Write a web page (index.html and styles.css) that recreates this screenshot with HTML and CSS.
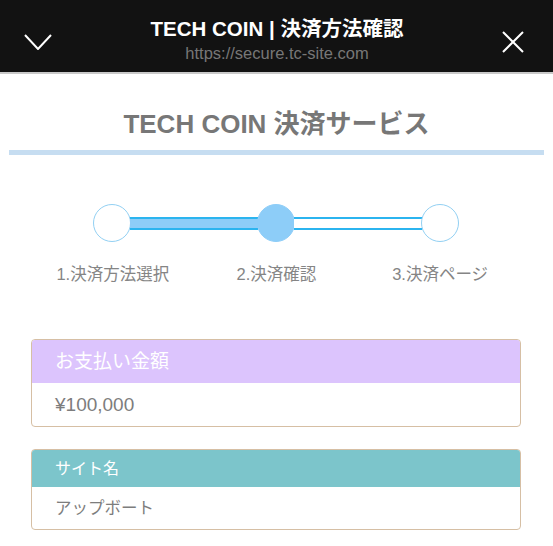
FILE: index.html
```html
<!DOCTYPE html>
<html lang="ja">
<head>
<meta charset="utf-8">
<link rel="stylesheet" href="styles.css">
</head>
<body>
<header class="topbar">
  <svg class="icon chevron" viewBox="0 0 28 16" width="28" height="16"><path d="M1 1 L14 15 L27 1" fill="none" stroke="#fff" stroke-width="2"/></svg>
  <div class="topbar-text">
    <div class="topbar-title">TECH COIN | 決済方法確認</div>
    <div class="topbar-url">https://secure.tc-site.com</div>
  </div>
  <svg class="icon close" viewBox="0 0 22 22" width="22" height="22"><path d="M1 1 L21 21 M21 1 L1 21" fill="none" stroke="#fff" stroke-width="2"/></svg>
</header>
<main>
  <h1 class="page-title">TECH COIN 決済サービス</h1>
  <div class="title-rule"></div>
  <section class="steps">
    <div class="track">
      <span class="dot"></span>
      <span class="seg seg-done"></span>
      <span class="dot dot-active"></span>
      <span class="seg"></span>
      <span class="dot"></span>
    </div>
    <div class="labels">
      <span>1.決済方法選択</span>
      <span>2.決済確認</span>
      <span>3.決済ページ</span>
    </div>
  </section>
  <section class="card">
    <div class="card-head head-purple">お支払い金額</div>
    <div class="card-body">¥100,000</div>
  </section>
  <section class="card card-site">
    <div class="card-head head-teal">サイト名</div>
    <div class="card-body">アップボート</div>
  </section>
</main>
</body>
</html>
```
FILE: styles.css
```css
* { box-sizing: border-box; }
body {
  margin: 0;
  background: #fff;
  font-family: "Liberation Sans", "Noto Sans CJK JP", sans-serif;
}
.topbar {
  height: 74px;
  background: #121212;
  border-bottom: 2px solid #c9c9c9;
  display: flex;
  align-items: center;
  justify-content: space-between;
  padding: 0 29px 0 24px;
}
.icon { display: block; }
.chevron { margin-top: 12px; }
.close { margin-top: 12px; }
.topbar-text {
  text-align: center;
  padding-top: 6px;
}
.topbar-title {
  color: #fff;
  font-weight: bold;
  font-size: 20.5px;
  line-height: 24px;
}
.topbar-url {
  color: #777;
  font-size: 16.5px;
  line-height: 18px;
  margin-top: 3px;
}
.page-title {
  margin: 0;
  padding-top: 35px;
  text-align: center;
  color: #777;
  font-size: 26px;
  line-height: 30px;
  font-weight: bold;
}
.title-rule {
  margin: 11px 9px 0;
  height: 5px;
  background: #c6ddf1;
}
.steps {
  margin: 49px 31px 0;
}
.track {
  display: flex;
  align-items: center;
  padding: 0 63px 0 62px;
}
.dot {
  flex: none;
  width: 38px;
  height: 38px;
  border-radius: 50%;
  border: 1.5px solid #92d0f3;
  background: #fff;
}
.dot-active {
  background: #8dcdf8;
  border-color: #8dcdf8;
}
.seg {
  flex: 1;
  height: 13px;
  border-top: 2px solid #2bb4ef;
  border-bottom: 2px solid #2bb4ef;
  background: #fff;
  margin: 0 -1px;
}
.seg-done { background: #8dcdf8; }
.labels {
  display: grid;
  grid-template-columns: repeat(3, 1fr);
  margin-top: 22px;
  text-align: center;
  color: #858585;
  font-size: 16.5px;
  line-height: 20px;
}
.card {
  margin: 55px 32px 0 31px;
  border: 1.5px solid #d6bfa4;
  border-radius: 4px;
  overflow: hidden;
}
.card-site { margin-top: 22px; }
.card-head {
  color: #fff;
  padding-left: 23px;
}
.head-purple {
  background: #dcc4fd;
  height: 43px;
  font-size: 19px;
  line-height: 43px;
}
.head-teal {
  background: #7cc5cb;
  height: 37px;
  font-size: 16px;
  line-height: 37px;
}
.card-body {
  height: 43px;
  padding-left: 23px;
  color: #7d7d7d;
  font-size: 19px;
  line-height: 43px;
}
.card-site .card-body {
  height: 42px;
  font-size: 16.5px;
  line-height: 42px;
}
```
